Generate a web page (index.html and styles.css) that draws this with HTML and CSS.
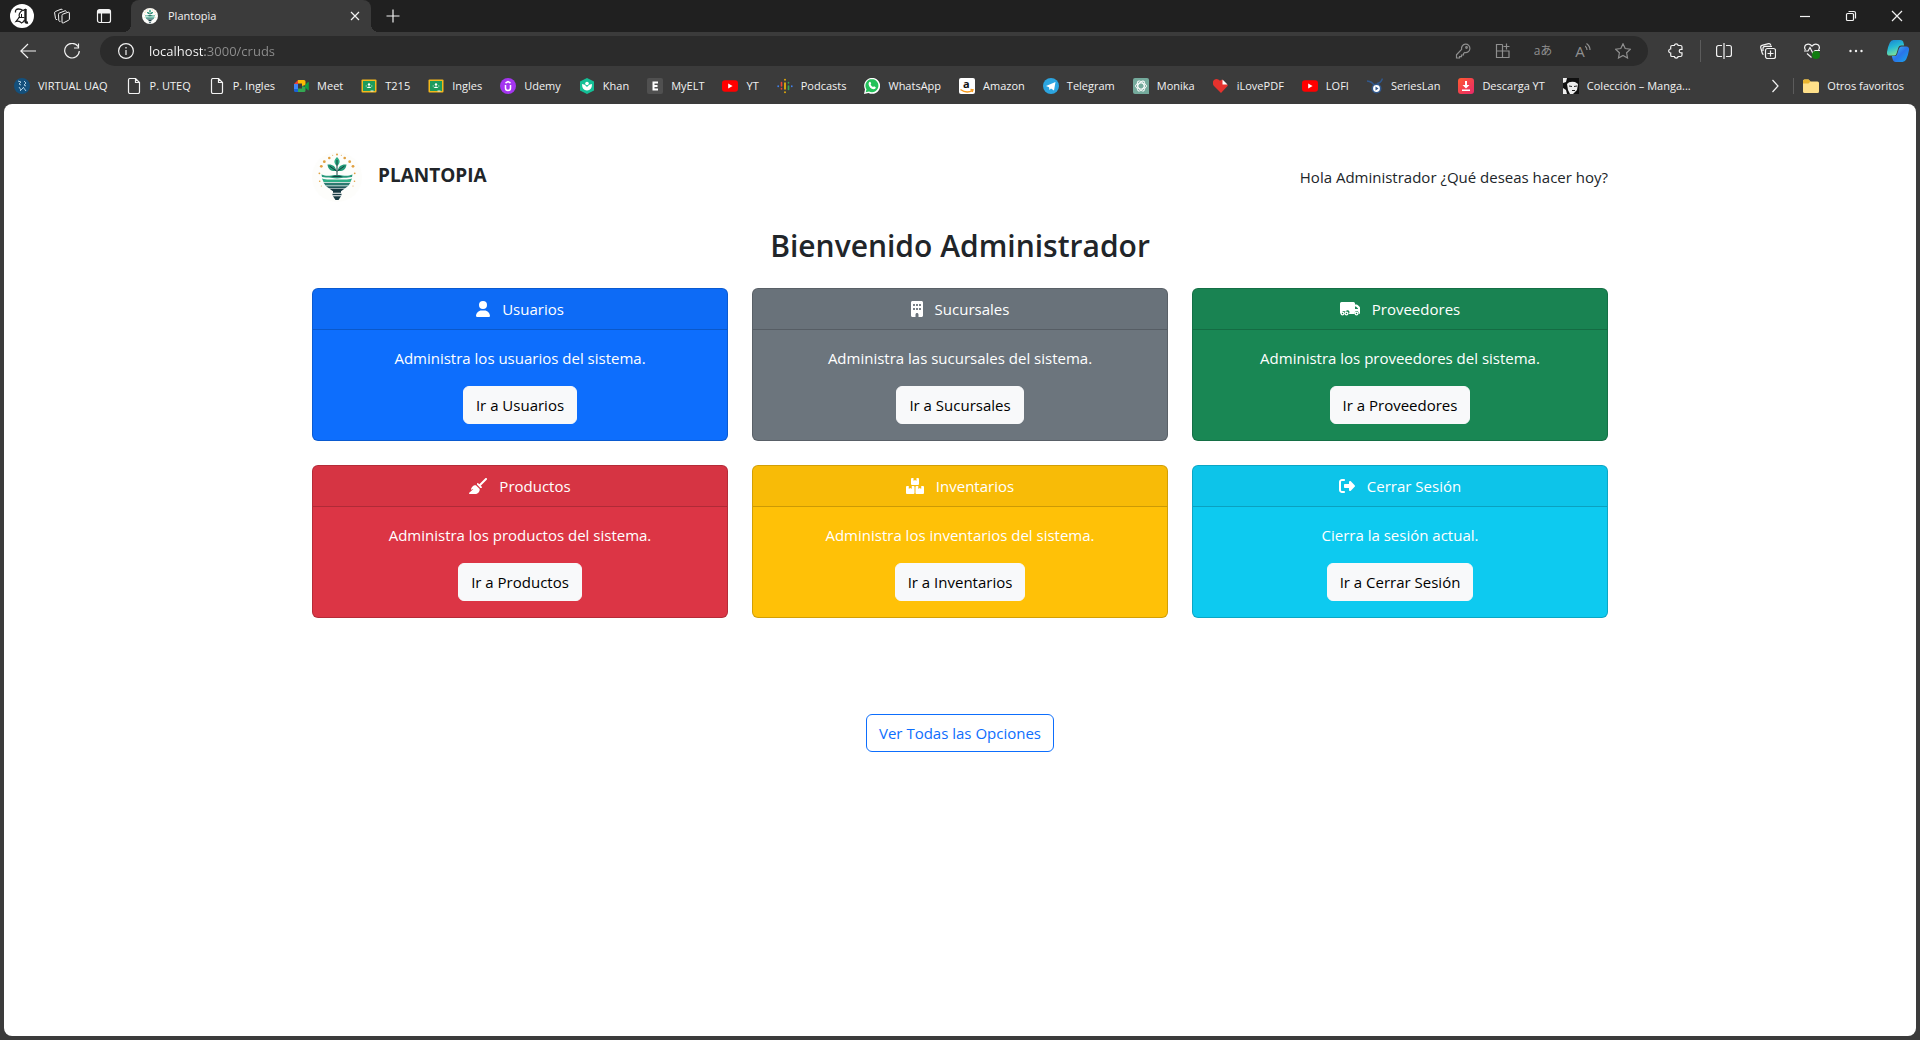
FILE: index.html
```
<!DOCTYPE html>
<html lang="es">
<head>
<meta charset="utf-8">
<title>Plantopìa</title>
<link rel="stylesheet" href="styles.css">
</head>
<body>
<svg class="sprite" aria-hidden="true">
  <symbol id="logo" viewBox="0 0 50 50">
    <circle cx="25" cy="25" r="25" fill="#fdfdfb"/>
    <g fill="#e0a040">
      <circle cx="25" cy="2.4" r="1"/><circle cx="20.7" cy="3.3" r=".5"/><circle cx="29.3" cy="3.3" r=".5"/>
      <circle cx="17.3" cy="6" r="1.3"/><circle cx="32.7" cy="6" r="1.3"/>
      <circle cx="12.3" cy="9.7" r="1.4"/><circle cx="37.7" cy="9.7" r="1.4"/>
      <circle cx="9.3" cy="14.3" r="1.4"/><circle cx="41" cy="14.3" r="1.4"/>
      <circle cx="7.4" cy="21.3" r=".9"/><circle cx="42.7" cy="21.3" r=".9"/>
      <circle cx="7.7" cy="29.3" r=".8"/><circle cx="42.5" cy="29.3" r=".8"/>
      <circle cx="9.3" cy="34" r=".5"/><circle cx="41" cy="34" r=".5"/>
    </g>
    <path d="M25 5c3.500 3.500 3.500 6 0 9-3.500-3-3.500-5.500 0-9z" fill="#2fae87"/>
    <path d="M15.500 12.500c5-.5 8 1.500 9 6.500-5.500.5-8.500-1.500-9-6.500zM34.500 12.500c-5-.5-8 1.500-9 6.500 5.500.5 8.500-1.500 9-6.500z" fill="#239a78"/>
    <path d="M25 8v17M17.500 14l7 5M32.500 14l-7 5" stroke="#173f40" stroke-width="1" fill="none"/>
    <path d="M9.500 22.500c6 2.500 9 .5 15.500.5s9.500 2 15.500-.5L40 25c-6 1-8 .5-15 1.500-7-1-9-.5-15-1.500z" fill="#2a9a7d"/>
    <path d="M19 25c3-1.800 9-1.800 12 0z" fill="#173f40"/>
    <path d="M10 26.500c6 2 9 .5 15 1 6-.5 9 1 15-1l-1.500 3.500h-27z" fill="#2fae87"/>
    <path d="M11.500 30.800h27l-2 2.700h-23z" fill="#2c7a70"/>
    <path d="M14 34.200h22l-3 2H17z" fill="#1d5557"/>
    <path d="M17.500 36.800h15l-3.500 2.500v1.500h-8v-1.500zM20.500 41.800h9v1.500h-9zM21 44.200h8L26.500 48h-3z" fill="#173a43"/>
  </symbol>
  <symbol id="page" viewBox="0 0 16 16"><path d="M2.500 2Q2.500.5 4 .5h5.500l4 4V14q0 1.500-1.500 1.500H4Q2.500 15.500 2.500 14zM9.500.5V4.500h4" fill="none" stroke="#f2f2f2" stroke-width="1.200"/></symbol>
  <symbol id="classroom" viewBox="0 0 16 16"><rect x=".5" y="1.500" width="15" height="13" rx="1" fill="#f4b81c"/><rect x="2" y="3" width="12" height="10" fill="#1e9b5c"/><circle cx="8" cy="6.500" r="1.200" fill="#fff"/><path d="M5.500 10q2.500-3 5 0z" fill="#fff"/><circle cx="5.200" cy="8" r=".7" fill="#9ed3b6"/><circle cx="10.800" cy="8" r=".7" fill="#9ed3b6"/><path d="M9.500 12.500h3v1h-3z" fill="#eee"/></symbol>
  <symbol id="youtube" viewBox="0 0 16 16"><rect y="2.300" width="16" height="11.400" rx="3" fill="#f00"/><path d="M6.200 5.500v5L10.600 8z" fill="#fff"/></symbol>
</svg>

<header class="browser">
  <div class="titlebar">
    <div class="tools">
      <button class="avatar" aria-label="Perfil"><svg viewBox="0 0 24 24"><circle cx="12" cy="12" r="12" fill="#fff"/><g fill="none" stroke="#1c1c1c"><path d="M5.500 8.500Q5 5 8.500 5q2.500 0 4.500 1.500l3-1.500" stroke-width="1.300"/><path d="M15.500 5v12q0 2 2.500 1.500" stroke-width="2.400"/><path d="M12 6.500Q8 10 9.500 13L6 17.500q3.500-1 5.500 1.500 2.500-1 3-3" stroke-width="1.200"/><path d="M8.500 13.500h6M11.500 10v3" stroke-width="1"/></g></svg></button>
      <button aria-label="Áreas de trabajo"><svg viewBox="0 0 16 16" class="line thin"><path d="M8 7.500q0-1 .8-1.300l5.400-2q1.200-.3 1.200.8v6q0 .8-.8 1.200l-5.200 2.700q-1.400.6-1.400-.9zM6.500 13.300q-1.500.5-1.700-.9l-.3-6q0-1 .8-1.300l5.700-2.300q1-.3 1.500.8M3.200 11.500q-1.500.5-1.700-.9l-.9-5.800q0-1 .8-1.300L7 1.200q1-.3 1.500.8"/></svg></button>
      <button aria-label="Pestañas verticales"><svg viewBox="0 0 16 16" class="line"><rect x="1.500" y="1.500" width="13" height="13" rx="2"/><path d="M2 3h12M2 4.500h12" stroke-width="2"/><path d="M5.500 5v9"/></svg></button>
    </div>
    <div class="tab">
      <svg class="ico"><use href="#logo"/></svg>
      <span class="tab-title">Plantopìa</span>
      <button aria-label="Cerrar pestaña"><svg viewBox="0 0 16 16" class="line ico"><path d="M4 4l8 8M12 4l-8 8"/></svg></button>
    </div>
    <button class="new-tab" aria-label="Nueva pestaña"><svg viewBox="0 0 16 16" class="line ico"><path d="M8 1.500v13M1.500 8h13"/></svg></button>
    <div class="window-buttons">
      <button aria-label="Minimizar"><svg viewBox="0 0 16 16" class="line ico"><path d="M3 8.500h10"/></svg></button>
      <button aria-label="Restaurar"><svg viewBox="0 0 16 16" class="line ico"><rect x="3.500" y="5.500" width="7" height="7" rx="1"/><path d="M5.500 3.500h5.500q1.500 0 1.500 1.500v5.500"/></svg></button>
      <button aria-label="Cerrar"><svg viewBox="0 0 16 16" class="line ico"><path d="M3 3l10 10M13 3L3 13"/></svg></button>
    </div>
  </div>

  <div class="toolbar">
    <button class="nav" aria-label="Atrás"><svg viewBox="0 0 16 16" class="line ico"><path d="M16 8H.8M8 1L.8 8 8 15"/></svg></button>
    <button class="nav" aria-label="Actualizar"><svg viewBox="0 0 16 16" class="line ico"><path d="M14 3.500A7.300 7.300 0 1 0 15.300 8M14.500.5v4.500H10"/></svg></button>
    <div class="address">
      <svg viewBox="0 0 16 16" class="line ico"><circle cx="8" cy="8" r="7.400"/><path d="M8 7v5M8 4v1.500"/></svg>
      <input type="text" value="localhost:3000/cruds" aria-label="Dirección">
      <div class="address-actions">
        <button aria-label="Contraseñas"><svg viewBox="0 0 16 16" class="line ico"><path d="M6.600 6.300a4.200 4.200 0 1 1 3.200 3.200L8.500 10.500v1.500H6.500v1.700H4.500V15H1.500v-3.200z"/><circle cx="11.500" cy="4.500" r=".8"/></svg></button>
        <button aria-label="Aplicación"><svg viewBox="0 0 16 16" class="line ico"><path d="M7.500 1.500h-6v13h12.500V8H1.500M7.500 1.500v13M11.500.5v6M8.500 3.500h6"/></svg></button>
        <button class="translate" aria-label="Traducir">aあ</button>
        <button class="read" aria-label="Leer en voz alta">A<svg viewBox="0 0 6 10" class="line"><path d="M0 3q2 1.500 2 4M1.500 .5Q5 3 5 7"/></svg></button>
        <button aria-label="Favorito"><svg viewBox="0 0 16 16" class="line ico"><path d="M8 .8l2.200 4.700 5.200.7-3.800 3.600.9 5.200L8 12.500 3.500 15l.9-5.200L.6 6.200l5.200-.7z"/></svg></button>
      </div>
    </div>
    <div class="extensions">
      <button aria-label="Extensiones"><svg viewBox="0 0 16 16" class="line ico"><path d="M4 2.500h2.300a2 2 0 0 1 3.900 0h2.300q1.500 0 1.500 1.500v2.300h-1a1.800 1.800 0 0 0 0 3.600h1V12q0 1.500-1.500 1.500h-2.300a2 2 0 0 1-3.900 0H4q-1.300 0-1.300-1.300V10a2 2 0 0 1 0-4V4Q2.700 2.500 4 2.500z"/></svg></button>
    </div>
    <div class="side-tools">
      <button aria-label="Pantalla dividida"><svg viewBox="0 0 16 16" class="line ico"><path d="M6 2.500H2.500Q.6 2.500.6 4.500v7q0 2 2 2H6M10 2.500h3.500q1.900 0 1.900 2v7q0 2-2 2H10M8 0v16"/></svg></button>
      <button aria-label="Colecciones"><svg viewBox="0 0 16 16" class="line ico"><rect x="5.500" y="5.500" width="10" height="10" rx="2"/><path d="M10.500 7.500v6M7.500 10.500h6M3.500 11.500q-1-.3-1.300-1.500L.7 4.500Q.3 3 2 2.400L8.500.7q1.700-.4 2.300 1.500M3 8V5.500q0-2.200 2-2.200h7"/></svg></button>
      <button aria-label="Rendimiento"><svg viewBox="0 0 16 16" class="line ico"><path d="M1.500 7Q-.5 4 2 1.800 5-.2 8 3q3-3.200 6-1.200 2.500 2.200.5 5.200M3 10.500l4.500 4M0 8h4l2-3.500 3 6 2-3h5"/></svg><svg class="dot" viewBox="0 0 8 8"><circle cx="4" cy="4" r="4" fill="#107c10"/></svg></button>
      <button aria-label="Más"><svg viewBox="0 0 16 16" class="ico"><g fill="#f2f2f2"><circle cx="2.500" cy="8" r="1.200"/><circle cx="8" cy="8" r="1.200"/><circle cx="13.500" cy="8" r="1.200"/></g></svg></button>
    </div>
    <button class="copilot" aria-label="Copilot"><svg viewBox="0 0 24 24"><defs><linearGradient id="cpa" x2=".4" y2="1"><stop stop-color="#1a7fd0"/><stop offset=".5" stop-color="#25b8d5"/><stop offset="1" stop-color="#7be39a"/></linearGradient><linearGradient id="cpb" y2="1"><stop stop-color="#49c3f5"/><stop offset=".5" stop-color="#2a73ea"/><stop offset="1" stop-color="#17a8e8"/></linearGradient></defs><path d="M7 0h7.500q3 0 3.500 3l.7 3h-3.200q-2.500 0-3.200 2.500L10.500 14.500Q9.800 17 8 17H3Q-.5 17 0 13 1 7 3 3 4.300 0 7 0z" fill="url(#cpa)"/><path d="M17 24H9.500Q7 24 6 20.500L5.300 17.500H8.500q2 0 2.700-2.500L13 9.500Q13.800 7 16 7h5q3.500 0 3 4-1 6.500-3 10Q19.500 24 17 24z" fill="url(#cpb)"/></svg></button>
  </div>

  <nav class="bookmarks" aria-label="Favoritos">
    <div class="bookmark-list">
    <a href="#"><svg viewBox="0 0 16 16"><circle cx="8" cy="8" r="8" fill="#14507c"/><path d="M4 3l3 1-2 2 2 1M10 3l2 2-2 2 2 1M5 9l2 3M9 9l3 4M6 13l4-4" stroke="#a9cbe2" fill="none"/></svg>VIRTUAL UAQ</a>
    <a href="#"><svg><use href="#page"/></svg>P. UTEQ</a>
    <a href="#"><svg><use href="#page"/></svg>P. Ingles</a>
    <a href="#"><svg viewBox="0 0 16 16"><path d="M1 6l4-4v4z" fill="#ea4335"/><path d="M5 2h6q1.500 0 1.500 1.500V7L9 8V5.500H5z" fill="#fbbc04"/><path d="M1 6h4v5H1z" fill="#4285f4"/><path d="M1 11h4v3H2.500Q1 14 1 12.500z" fill="#1a63d8"/><path d="M5 10.500h4V8l3.500 1v3.500Q12.500 14 11 14H5z" fill="#34a853"/><path d="M12 7l3-3q.8-.3.8.5v7.500q-.2.8-.8.300l-3-3z" fill="#0f9d40"/></svg>Meet</a>
    <a href="#"><svg><use href="#classroom"/></svg>T215</a>
    <a href="#"><svg><use href="#classroom"/></svg>Ingles</a>
    <a href="#"><svg viewBox="0 0 16 16"><circle cx="8" cy="8" r="8" fill="#a435f0"/><path d="M5.500 7v3q0 2.500 2.500 2.500t2.500-2.500V7M5.500 5L8 3.500 10.500 5" fill="none" stroke="#fff" stroke-width="1.500"/></svg>Udemy</a>
    <a href="#"><svg viewBox="0 0 16 16"><path d="M8 0l7 3.500v9L8 16l-7-3.500v-9z" fill="#14bf96"/><circle cx="8" cy="5.500" r="1.800" fill="#fff"/><path d="M3 6q3 0 5 3 2-3 5-3 0 6-5 6.500Q3 12 3 6z" fill="#fff"/></svg>Khan</a>
    <a href="#"><svg viewBox="0 0 16 16"><rect width="16" height="16" rx="2" fill="#505050"/><path d="M11 4.500H6.500v7H11M6.500 8h4" fill="none" stroke="#fff" stroke-width="2"/></svg>MyELT</a>
    <a href="#"><svg><use href="#youtube"/></svg>YT</a>
    <a href="#"><svg viewBox="0 0 16 16" fill="none" stroke-width="1.600" stroke-linecap="round"><path d="M8 1.500v.5M8 5v6M8 14v.5" stroke="#fbbc04"/><path d="M4.500 4.500V8M4.500 10.500v.5" stroke="#ea4335"/><path d="M11.500 4.500v.5M11.500 8v3.500" stroke="#34a853"/><path d="M1.200 8v.5M14.800 8v.5" stroke="#4285f4"/></svg>Podcasts</a>
    <a href="#"><svg viewBox="0 0 16 16"><path d="M0 16l1-4.500A8 8 0 1 1 4.500 15z" fill="#fff"/><path d="M1.700 14.300l.8-3A6.500 6.500 0 1 1 5 13.500z" fill="#23c15a"/><path d="M5.300 4q1-.8 1.500.5l.4 1-.6 1q1 2 2.500 2.500l.9-.8 1.800 1q0 2-2.300 2Q5.500 10.700 4.600 6.500q-.2-1.700.7-2.500z" fill="#fff"/></svg>WhatsApp</a>
    <a href="#"><svg viewBox="0 0 16 16"><rect width="16" height="16" rx="2" fill="#fff"/><text x="4" y="10" class="glyph">a</text><path d="M1.500 11.500q6 4.500 12 1M11.500 11.500l2.500.3-.8 2.200" fill="none" stroke="#f79a1c" stroke-width="1.300"/></svg>Amazon</a>
    <a href="#"><svg viewBox="0 0 16 16"><circle cx="8" cy="8" r="8" fill="#2ca5e0"/><path d="M3 8l9.500-4-1.500 8.500-3-2-1.500 1.500-.5-2.700z" fill="#fff"/></svg>Telegram</a>
    <a href="#"><svg viewBox="0 0 16 16"><path d="M2 0h12q2 0 2 2v14H2q-2 0-2-2V2Q0 0 2 0z" fill="#74aa9c"/><g fill="none" stroke="#fff" stroke-width=".9"><ellipse cx="8" cy="8" rx="5.500" ry="3"/><ellipse cx="8" cy="8" rx="5.500" ry="3" transform="rotate(60 8 8)"/><ellipse cx="8" cy="8" rx="5.500" ry="3" transform="rotate(120 8 8)"/></g></svg>Monika</a>
    <a href="#"><svg viewBox="0 0 16 16"><path d="M8 15L1 8Q-1.500 4.500 1 2q3-2.500 6 .8L9 1.500 15 7.500z" fill="#e5322d"/><path d="M9.500 1.500l5 5h-5z" fill="#fff"/></svg>iLovePDF</a>
    <a href="#"><svg><use href="#youtube"/></svg>LOFI</a>
    <a href="#"><svg viewBox="0 0 16 16"><path d="M0 3q5 .5 7 4M15.500.5Q14 5 10 5.500" stroke="#31588c" stroke-width="1.500" fill="none"/><circle cx="9.500" cy="10.500" r="4.200" fill="#fff" stroke="#31588c" stroke-width="1.600"/><path d="M8.500 8.500v4l3-2z" fill="#31588c"/></svg>SeriesLan</a>
    <a href="#"><svg viewBox="0 0 16 16"><defs><linearGradient id="dl" y2="1"><stop stop-color="#ff5a30"/><stop offset="1" stop-color="#e8286a"/></linearGradient></defs><rect width="16" height="16" rx="3" fill="url(#dl)"/><path d="M7 3h2v4h2.500L8 10.500 4.500 7H7zM4 11.500h8V13H4z" fill="#fff"/></svg>Descarga YT</a>
    <a href="#"><svg viewBox="0 0 16 16"><path d="M0 0h16v16H0z" fill="#111"/><path d="M0 0h4l-1 4-3 1zM4 6q2-3 8-2l3 2-1 6-4 4H7L5 12zM0 10l3 2 1 4H0z" fill="#eee"/><path d="M6 8l3 .5M11 8.500l3-.5M9 12.500h3" stroke="#222"/></svg>Colección – Manga...</a>
    </div>
    <button class="more" aria-label="Más favoritos"><svg viewBox="0 0 16 16" class="line ico"><path d="M5.500 2l5.500 6-5.500 6"/></svg></button>
    <a href="#" class="others"><svg viewBox="0 0 16 16"><path d="M0 3q0-1.500 1.500-1.500h4L7.500 3.500h7Q16 3.500 16 5v8.500Q16 15 14.500 15h-13Q0 15 0 13.500z" fill="#ffe08a"/><path d="M0 5V3q0-1.500 1.500-1.500h4l2 2-2 2H0z" fill="#eab530"/></svg>Otros favoritos</a>
  </nav>
</header>

<main class="page">
  <div class="container">
    <header class="masthead">
      <a href="#" class="brand"><svg class="logo"><use href="#logo"/></svg><span>PLANTOPIA</span></a>
      <p>Hola Administrador ¿Qué deseas hacer hoy?</p>
    </header>
    <h1>Bienvenido Administrador</h1>
    <div class="cards">
      <section class="card primary">
        <h2><svg viewBox="0 0 448 512" width="14" height="16"><path d="M224 256A128 128 0 1 0 224 0a128 128 0 1 0 0 256zm-45.700 48C79.800 304 0 383.800 0 482.300C0 498.700 13.300 512 29.700 512H418.300c16.400 0 29.700-13.300 29.700-29.700C448 383.800 368.200 304 269.700 304H178.300z"/></svg>Usuarios</h2>
        <div class="card-body"><p>Administra los usuarios del sistema.</p><a href="#" class="btn">Ir a Usuarios</a></div>
      </section>
      <section class="card secondary">
        <h2><svg viewBox="0 0 384 512" width="12" height="16"><path fill-rule="evenodd" d="M48 0C21.500 0 0 21.500 0 48V464c0 26.500 21.500 48 48 48h96V432c0-26.500 21.500-48 48-48s48 21.500 48 48v80h96c26.500 0 48-21.500 48-48V48c0-26.500-21.500-48-48-48H48zM64 240c0-8.800 7.200-16 16-16h32c8.800 0 16 7.200 16 16v32c0 8.800-7.200 16-16 16H80c-8.800 0-16-7.200-16-16V240zm112-16h32c8.800 0 16 7.200 16 16v32c0 8.800-7.200 16-16 16H176c-8.800 0-16-7.200-16-16V240c0-8.800 7.200-16 16-16zm80 16c0-8.800 7.200-16 16-16h32c8.800 0 16 7.200 16 16v32c0 8.800-7.200 16-16 16H272c-8.800 0-16-7.200-16-16V240zM80 96h32c8.800 0 16 7.200 16 16v32c0 8.800-7.200 16-16 16H80c-8.800 0-16-7.200-16-16V112c0-8.800 7.200-16 16-16zm80 16c0-8.800 7.200-16 16-16h32c8.800 0 16 7.200 16 16v32c0 8.800-7.200 16-16 16H176c-8.800 0-16-7.200-16-16V112zM272 96h32c8.800 0 16 7.200 16 16v32c0 8.800-7.200 16-16 16H272c-8.800 0-16-7.200-16-16V112c0-8.800 7.200-16 16-16z"/></svg>Sucursales</h2>
        <div class="card-body"><p>Administra las sucursales del sistema.</p><a href="#" class="btn">Ir a Sucursales</a></div>
      </section>
      <section class="card success">
        <h2><svg viewBox="0 0 640 512" width="20" height="16"><path fill-rule="evenodd" d="M48 32h384q48 0 48 48v32h52q20 0 34 14l60 60q14 14 14 34v148q0 48-32 48h-16a64 64 0 1 0-114 0H272a64 64 0 1 0-96-55 64 64 0 1 0-125 55Q0 410 0 368V80Q0 32 48 32zM480 176v80h96v-14l-66-66z"/><path fill-rule="evenodd" d="M80 336a64 64 0 1 1 0 128 64 64 0 1 1 0-128zm0 40a24 24 0 1 0 0 48 24 24 0 1 0 0-48zM208 336a64 64 0 1 1 0 128 64 64 0 1 1 0-128zm0 40a24 24 0 1 0 0 48 24 24 0 1 0 0-48zM528 336a64 64 0 1 1 0 128 64 64 0 1 1 0-128zm0 40a24 24 0 1 0 0 48 24 24 0 1 0 0-48z"/></svg>Proveedores</h2>
        <div class="card-body"><p>Administra los proveedores del sistema.</p><a href="#" class="btn">Ir a Proveedores</a></div>
      </section>
      <section class="card danger">
        <h2><svg viewBox="0 0 576 512" width="18" height="16"><path d="M566.600 54.600c12.500-12.500 12.500-32.800 0-45.300s-32.800-12.500-45.300 0l-192 192-34.700-34.700c-4.200-4.200-10-6.600-16-6.600c-12.500 0-22.600 10.100-22.600 22.600v29.100L364.300 320h29.100c12.500 0 22.600-10.100 22.600-22.600c0-6-2.400-11.800-6.600-16l-34.700-34.700 192-192zM341.100 353.400L222.600 234.900c-42.700-3.700-85.200 11.700-115.800 42.300l-8 8C76.500 307.500 64 337.700 64 369.200c0 6.800 7.100 11.200 13.200 8.200l51.100-25.500c5-2.500 9.500 4.100 5.400 7.900L7.300 473.400C2.700 477.600 0 483.600 0 489.900C0 502.100 9.900 512 22.100 512l173.300 0c38.800 0 75.900-15.400 103.400-42.800c30.600-30.600 45.900-73.100 42.300-115.800z"/></svg>Productos</h2>
        <div class="card-body"><p>Administra los productos del sistema.</p><a href="#" class="btn">Ir a Productos</a></div>
      </section>
      <section class="card warning">
        <h2><svg viewBox="0 0 576 512" width="18" height="16"><path d="M192 0h48v80q0 10 10 6l38-19 38 19q10 4 10-6V0h48q32 0 32 32v160q0 32-32 32H192q-32 0-32-32V32q0-32 32-32zM32 256h56v80q0 10 10 6l38-19 38 19q10 4 10-6v-80h56q32 0 32 32v192q0 32-32 32H32q-32 0-32-32V288q0-32 32-32zM336 256h56v80q0 10 10 6l38-19 38 19q10 4 10-6v-80h56q32 0 32 32v192q0 32-32 32H336q-32 0-32-32V288q0-32 32-32z"/></svg>Inventarios</h2>
        <div class="card-body"><p>Administra los inventarios del sistema.</p><a href="#" class="btn">Ir a Inventarios</a></div>
      </section>
      <section class="card info">
        <h2><svg viewBox="0 0 512 512" width="16" height="16"><path d="M377.900 105.900L500.700 228.700c7.200 7.200 11.300 17.100 11.300 27.300s-4.100 20.100-11.300 27.300L377.900 406.100c-6.400 6.400-15 9.900-24 9.900c-18.700 0-33.900-15.200-33.900-33.900l0-62.100-128 0c-17.700 0-32-14.300-32-32l0-64c0-17.700 14.300-32 32-32l128 0 0-62.100c0-18.700 15.200-33.900 33.900-33.900c9 0 17.600 3.600 24 9.900zM160 96L96 96c-17.700 0-32 14.300-32 32l0 256c0 17.700 14.300 32 32 32l64 0c17.700 0 32 14.300 32 32s-14.300 32-32 32l-64 0c-53 0-96-43-96-96L0 128C0 75 43 32 96 32l64 0c17.700 0 32 14.300 32 32s-14.300 32-32 32z"/></svg>Cerrar Sesión</h2>
        <div class="card-body"><p>Cierra la sesión actual.</p><a href="#" class="btn">Ir a Cerrar Sesión</a></div>
      </section>
    </div>
    <button class="btn outline">Ver Todas las Opciones</button>
  </div>
</main>
</body>
</html>
```
FILE: styles.css
```
* { box-sizing: border-box; }

body {
  margin: 0;
  min-height: 100vh;
  display: flex;
  flex-direction: column;
  background: #3b3b3b;
  color: #212529;
  font: 15px/24px "Open Sans", "Noto Sans", "Noto Sans CJK JP", sans-serif;
}

h1, h2, p { margin: 0; }
a { color: inherit; text-decoration: none; }
button {
  display: flex;
  align-items: center;
  justify-content: center;
  padding: 0;
  border: 0;
  background: none;
  color: inherit;
  font: inherit;
}

.sprite { position: absolute; width: 0; height: 0; }
.ico { width: 16px; height: 16px; flex: none; }
.line { fill: none; stroke: currentColor; stroke-width: 1.2; }
.thin { stroke-width: 1; }

/* Browser chrome */
.browser { color: #f2f2f2; font-size: 11px; line-height: 16px; }

.titlebar { display: flex; height: 32px; background: #202020; }
.tools { display: flex; align-items: center; width: 131px; padding-left: 10px; gap: 20px; }
.tools svg { width: 16px; height: 16px; display: block; }
.tools .avatar svg { width: 24px; height: 24px; }
.tools button:last-child { margin-left: 6px; }

.tab {
  position: relative;
  display: flex;
  align-items: center;
  gap: 10px;
  width: 240px;
  padding: 0 8px 0 11px;
  border-radius: 8px 8px 0 0;
  background: #3b3b3b;
}
.tab::before, .tab::after {
  content: "";
  position: absolute;
  bottom: 0;
  width: 8px;
  height: 8px;
}
.tab::before { right: 100%; background: radial-gradient(circle at 0 0, #202020 8px, #3b3b3b 8px); }
.tab::after { left: 100%; background: radial-gradient(circle at 100% 0, #202020 8px, #3b3b3b 8px); }
.tab-title { flex: 1; }
.new-tab { width: 44px; }
.window-buttons { display: flex; margin-left: auto; }
.window-buttons button { width: 46px; }

.toolbar { display: flex; align-items: center; height: 38px; padding: 0 10px 0 6px; }
.nav { width: 44px; }
.address {
  flex: 1;
  display: flex;
  align-items: center;
  height: 30px;
  margin-left: 6px;
  padding: 0 5px 0 18px;
  border-radius: 15px;
  background: #2b2b2b;
}
.address input {
  flex: 1;
  min-width: 0;
  margin-left: 15px;
  padding: 0;
  border: 0;
  outline: 0;
  color: transparent;
  background: linear-gradient(90deg, #fff 56px, #8f8f8f 56px);
  background-clip: text;
  font: 13px/20px "Open Sans", "Noto Sans", sans-serif;
}
.address-actions { display: flex; color: #8f8f8f; }
.address-actions button { width: 40px; }
.translate { font-size: 12px; }
.address-actions .read { align-items: flex-start; font-size: 15px; }
.read svg { width: 6px; height: 10px; }

.extensions { width: 53px; padding: 3px 0 3px 12px; border-right: 1px solid #5c5c5c; }
.extensions button { width: 32px; }
.side-tools { display: flex; padding-left: 1px; }
.side-tools button { position: relative; width: 44px; }
.side-tools .dot { position: absolute; right: 14px; bottom: 0; width: 8px; height: 8px; }
.copilot { margin-left: 8px; }
.copilot svg { width: 24px; height: 22px; }

.bookmarks { display: flex; align-items: center; height: 34px; padding: 0 16px 2px 14px; }
.bookmark-list { display: flex; gap: 18px; }
.bookmarks a { display: flex; align-items: center; gap: 8px; white-space: nowrap; }
.bookmarks svg { width: 16px; height: 16px; flex: none; }
.glyph { font: bold 11px "Open Sans", sans-serif; fill: #111; }
.more { margin-left: auto; }
.others { margin-left: 10px; padding-left: 9px; border-left: 1px solid #5c5c5c; }

/* Page */
.page {
  flex: 1;
  margin: 0 4px 4px;
  padding: 48px 12px;
  border-radius: 8px;
  background: #fff;
}
.container { max-width: 1296px; margin: 0 auto; }
.masthead { display: flex; align-items: center; justify-content: space-between; }
.brand { display: flex; align-items: center; gap: 16px; font-size: 19px; font-weight: 700; }
.brand span { padding-bottom: 4px; }
.logo { width: 50px; height: 50px; }
h1 { margin: 24px 0 22px; font-size: 30px; line-height: 40px; font-weight: 600; text-align: center; }

.cards { display: grid; grid-template-columns: repeat(3, 1fr); gap: 24px; }
.card {
  border: 1px solid rgba(0, 0, 0, .175);
  border-radius: 6px;
  color: #fff;
  text-align: center;
}
.card h2 {
  display: flex;
  align-items: center;
  justify-content: center;
  gap: 12px;
  padding: 8px 16px;
  border-bottom: 1px solid rgba(0, 0, 0, .175);
  border-radius: 5px 5px 0 0;
  background: rgba(33, 37, 41, .03);
  font-size: 15px;
  font-weight: 400;
}
.card svg { fill: currentColor; }
.card-body { padding: 16px; display: flex; flex-direction: column; align-items: center; gap: 16px; }
.primary { background-color: #0d6efd; }
.secondary { background-color: #6c757d; }
.success { background-color: #198754; }
.danger { background-color: #dc3545; }
.warning { background-color: #ffc107; }
.info { background-color: #0dcaf0; }

.btn {
  display: block;
  padding: 6px 12px;
  border: 1px solid #f8f9fa;
  border-radius: 6px;
  background: #f8f9fa;
  color: #000;
}
.outline { margin: 96px auto 0; border-color: #0d6efd; background: transparent; color: #0d6efd; }
```
